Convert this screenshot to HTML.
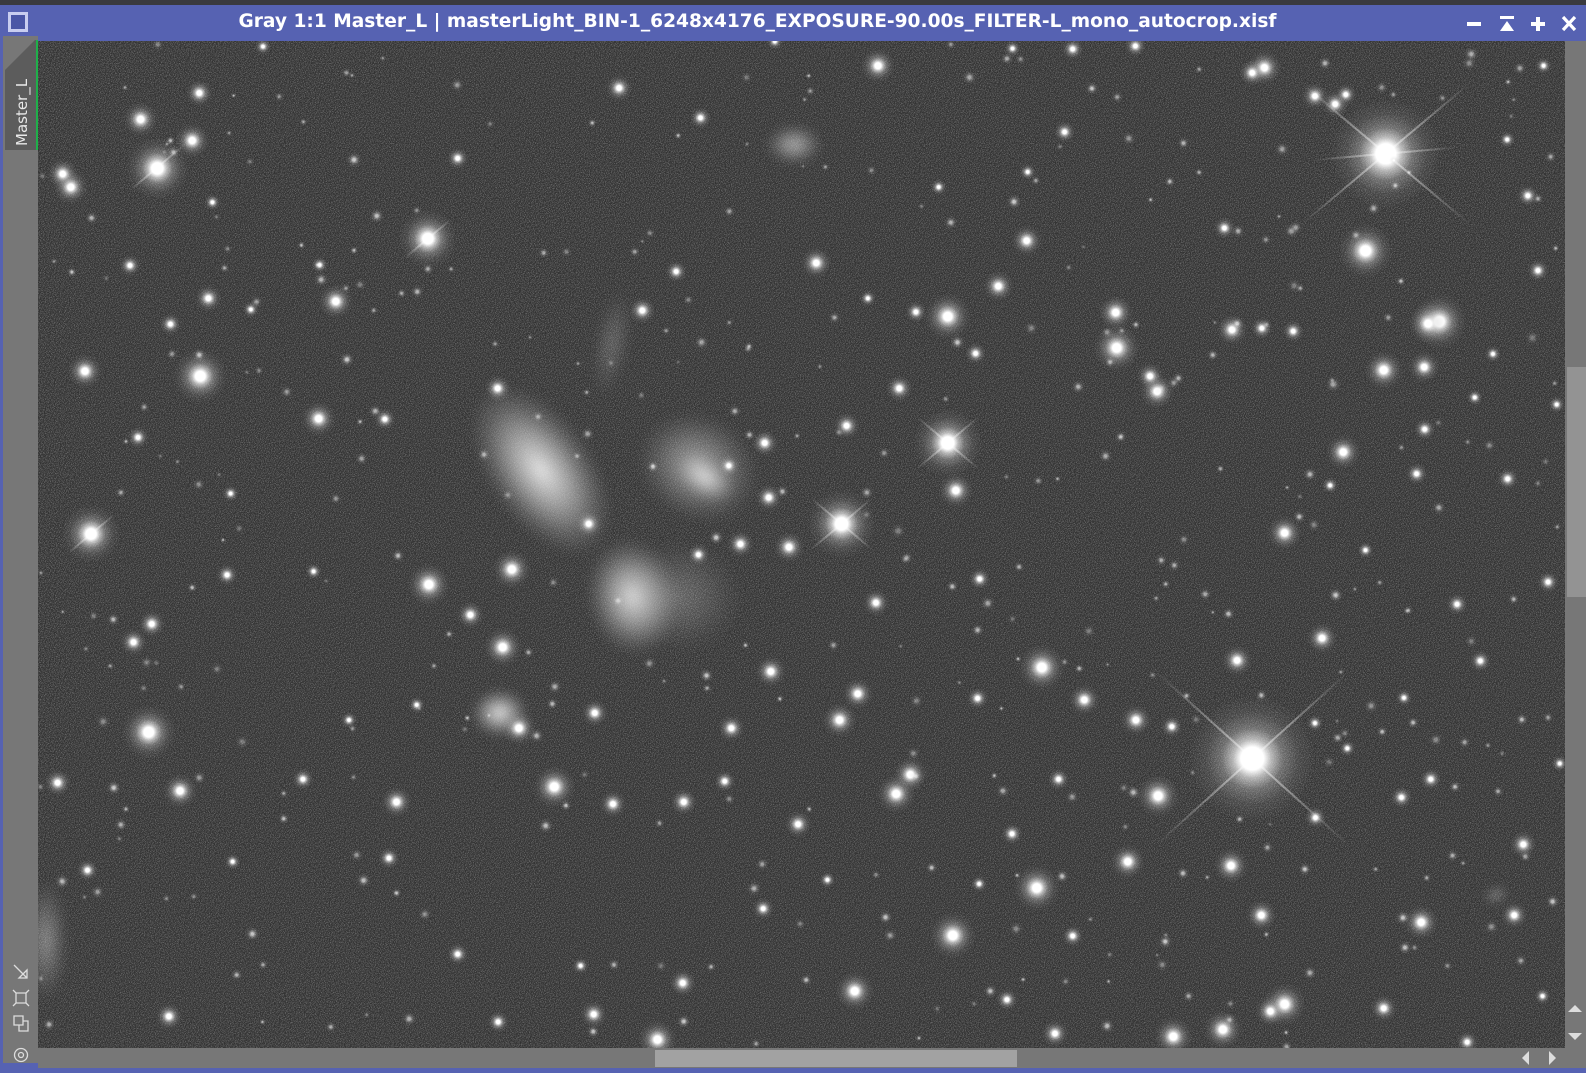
<!DOCTYPE html>
<html><head><meta charset="utf-8">
<style>
html,body{margin:0;padding:0;width:1586px;height:1073px;overflow:hidden;background:#3a3a3e;font-family:"DejaVu Sans","Liberation Sans",sans-serif}
#win{position:absolute;left:0;top:5px;width:1586px;height:1068px;background:#5662b2}
#title{position:absolute;left:0;top:0;width:1515px;height:36px;color:#fff;font-weight:bold;font-size:18.6px;line-height:33px;text-align:center}
#ico{position:absolute;left:8px;top:7px;width:20px;height:20px;border:3px solid #c8cdf0;box-sizing:border-box;background:#4a56a6}
#left{position:absolute;left:3px;top:36px;width:35px;height:1027px;background:#777}
#tab{position:absolute;left:2px;top:4px;width:31px;height:110px;background:#5c5c5c;border-right:2px solid #1fb04a;clip-path:polygon(0 30px,30px 0,100% 0,100% 100%,0 100%)}
#tab span{position:absolute;left:8px;color:#e8e8e8;font-size:15px;transform:rotate(-90deg);transform-origin:0 0;white-space:nowrap;top:106px}
#img{position:absolute;left:38px;top:41px;width:1527px;height:1007px;overflow:hidden;background:#363636}
#noise{position:absolute;left:0;top:0;width:100%;height:100%}
#vs{position:absolute;left:1565px;top:41px;width:21px;height:1007px;background:#777}
#vthumb{position:absolute;left:1567px;top:367px;width:19px;height:230px;background:#939393}
#hs{position:absolute;left:38px;top:1048px;width:1548px;height:20px;background:#777}
#hthumb{position:absolute;left:655px;top:1050px;width:362px;height:17px;background:#a2a2a2}
.tri{position:absolute;width:0;height:0}
#stars{position:absolute;left:-38px;top:-41px;width:1568px;height:1061px;transform-origin:0 0;transform:scale(1.0115,1.0113)}
.s{position:absolute;border-radius:50%}
.g{position:absolute;border-radius:50%;filter:blur(5px)}
.sp{position:absolute;height:2px;background:linear-gradient(90deg,rgba(255,255,255,0),rgba(255,255,255,.6) 50%,rgba(255,255,255,0))}
</style></head><body>
<div id="win">
 <div id="title">Gray 1:1 Master_L | masterLight_BIN-1_6248x4176_EXPOSURE-90.00s_FILTER-L_mono_autocrop.xisf</div>
 <div id="ico"></div>
 <svg style="position:absolute;left:1467px;top:8px" width="119" height="22" viewBox="0 0 119 22">
  <rect x="0" y="9" width="14" height="4" fill="#fff"/>
  <rect x="33" y="3" width="14" height="3" fill="#fff"/><polygon points="33,18 47,18 40,8" fill="#fff"/>
  <rect x="64" y="9" width="14" height="4" fill="#fff"/><rect x="69" y="4" width="4" height="14" fill="#fff"/>
  <path d="M96 4 L108 17 M108 4 L96 17" stroke="#fff" stroke-width="3.2"/>
 </svg>
</div>
<div id="left"><div id="tab"><span>Master_L</span></div>
 <svg style="position:absolute;left:6px;top:925px" width="24" height="110" viewBox="0 0 24 110" fill="none" stroke="#ddd" stroke-width="1.3">
  <path d="M5 4 L18 17 M18 9 L18 17 L10 17 Z"/>
  <path d="M7 32 H17 V42 H7 Z M4 29 L7 32 M20 29 L17 32 M4 45 L7 42 M20 45 L17 42"/>
  <path d="M5 55 H14 V64 H5 Z M10 64 V70 H19 V60 H14"/>
  <circle cx="12" cy="94" r="6.5"/><circle cx="12" cy="94" r="2.5"/>
 </svg>
</div>
<div id="img">
 <svg id="noise" width="1527" height="1007"><filter id="n"><feTurbulence type="fractalNoise" baseFrequency="1.2" numOctaves="1" seed="3"/><feColorMatrix type="matrix" values="0 0 0 0 0.5  0 0 0 0 0.5  0 0 0 0 0.5  2.2 0 0 0 -0.95"/></filter>
 <rect width="100%" height="100%" fill="#323232"/><rect width="100%" height="100%" filter="url(#n)" opacity="0.7"/></svg>
 <div id="stars"></div>
</div>
<div id="vs"></div><div id="vthumb"></div>
<div class="tri" style="left:1568px;top:1005px;border-left:7px solid transparent;border-right:7px solid transparent;border-bottom:7px solid #ddd"></div>
<div class="tri" style="left:1568px;top:1033px;border-left:7px solid transparent;border-right:7px solid transparent;border-top:7px solid #ddd"></div>
<div id="hs"></div><div id="hthumb"></div>
<div class="tri" style="left:1522px;top:1051px;border-top:7px solid transparent;border-bottom:7px solid transparent;border-right:7px solid #ddd"></div>
<div class="tri" style="left:1549px;top:1051px;border-top:7px solid transparent;border-bottom:7px solid transparent;border-left:7px solid #ddd"></div>
<script>
var c=document.getElementById('stars');
function star(x,y,r,a){a=a||1;var d=document.createElement('div');d.className='s';var R=r*2.1;
d.style.cssText='left:'+(x-R)+'px;top:'+(y-R)+'px;width:'+(2*R)+'px;height:'+(2*R)+'px;background:radial-gradient(circle closest-side,rgba(255,255,255,'+a+') 0%,rgba(255,255,255,'+a+') 18%,rgba(235,235,235,'+(a*0.7)+') 30%,rgba(210,210,210,'+(a*0.35)+') 48%,rgba(190,190,190,'+(a*0.12)+') 72%,rgba(180,180,180,0) 100%)';c.appendChild(d);}
function gal(x,y,rx,ry,rot,a){var d=document.createElement('div');d.className='g';
d.style.cssText='left:'+(x-rx)+'px;top:'+(y-ry)+'px;width:'+(2*rx)+'px;height:'+(2*ry)+'px;transform:rotate('+rot+'deg);background:radial-gradient(ellipse closest-side,rgba(245,245,245,'+a+') 0%,rgba(215,215,215,'+(a*0.7)+') 40%,rgba(180,180,180,'+(a*0.3)+') 75%,rgba(150,150,150,0) 100%)';c.appendChild(d);}
function spike(x,y,len,rot){var d=document.createElement('div');d.className='sp';
d.style.cssText='left:'+(x-len)+'px;top:'+(y-1)+'px;width:'+(2*len)+'px;transform:rotate('+rot+'deg)';c.appendChild(d);}
gal(535,465,95,52,55,0.9);gal(690,462,62,52,30,0.55);gal(697,472,32,20,35,0.75);
gal(625,590,45,58,-10,0.85);gal(670,590,65,55,0,0.25);gal(494,705,28,24,0,0.9);gal(785,143,28,20,0,0.6);
gal(605,340,18,55,10,0.22);gal(1479,885,12,6,-20,0.6);gal(45,930,22,60,0,0.4);
spike(1370,152,110,-40);spike(1370,152,110,40);spike(1370,152,70,-5);
spike(1238,750,130,-42);spike(1238,750,130,42);
spike(937,438,40,-40);spike(937,438,40,40);spike(832,518,40,-40);spike(832,518,40,40);
spike(155,166,35,-40);spike(423,236,30,-40);spike(90,528,30,-40);
var S=[[1370,152,26],[1238,750,30],[937,438,16],[832,518,16],[155,166,15],[423,236,14],[90,528,14],[147,724,13],[198,372,13],[1350,248,13],[937,313,11],[1104,344,11],[1423,318,13],[1412,320,9],[1030,660,11],[1025,878,11],[942,925,11],[548,778,10],[1145,787,10],[1270,993,10],[1209,1018,9],[845,980,9],[1405,912,8],[1217,856,8],[1115,852,8],[886,785,9],[900,766,8],[424,578,10],[506,563,9],[497,640,9],[332,298,8],[315,414,8],[84,367,8],[139,118,8],[190,139,8],[70,185,8],[62,172,7],[1368,366,9],[1328,447,8],[1270,527,8],[1307,631,7],[1144,387,8],[1103,309,8],[1218,326,7],[1408,363,7],[1250,67,8],[1238,72,6],[868,65,8],[612,87,6],[807,260,7],[1015,238,7],[987,283,7],[945,485,8],[762,664,7],[830,712,8],[848,686,7],[1072,692,7],[1123,712,7],[1223,653,7],[1506,835,6],[1497,905,6],[1247,905,7],[1160,1025,9],[650,1028,9],[178,782,8],[392,793,7],[167,1005,6],[57,774,6],[132,635,6],[150,617,6],[676,793,6],[606,795,6],[588,705,6],[723,720,6],[866,596,6],[780,541,7],[756,438,6],[837,421,6],[635,307,6],[492,384,6],[587,1003,6],[675,972,6],[1052,130,5],[452,156,5],[1520,267,5],[1510,193,5],[1300,95,6],[1320,103,6],[1490,473,5],[1530,575,5],[513,720,8],[720,460,5],[760,492,6],[732,538,6],[690,548,5],[582,518,6],[465,608,6],[197,92,6],[128,262,5],[206,295,6],[168,320,5],[136,432,5],[228,488,4],[380,414,5],[316,262,4],[248,306,4],[964,349,5],[889,384,6],[905,308,5],[1137,372,6],[1158,718,5],[1046,770,5],[966,690,5],[968,572,5],[1000,824,5],[1060,925,5],[1300,808,5],[1368,997,6],[1256,1000,7],[1043,1022,6],[995,988,5],[1385,788,5],[1414,770,5],[1463,653,5],[1440,597,5],[1400,468,5],[1278,327,5],[1247,324,5],[1330,93,5],[1210,225,5],[1490,138,4],[1526,65,4],[1060,48,5],[1122,45,5],[1001,48,4],[1016,170,4],[928,185,4],[858,295,4],[668,268,5],[692,116,5],[766,41,4],[260,46,4],[210,200,4],[224,568,5],[310,565,4],[86,860,5],[230,852,4],[299,770,5],[345,712,4],[412,697,4],[384,848,5],[452,943,5],[492,1010,5],[574,955,4],[754,898,5],[789,815,6],[716,772,5],[818,870,4],[968,874,4],[1300,715,4],[1332,740,4],[1388,690,4],[1350,544,4],[1315,480,4],[1408,424,5],[1458,393,4],[1476,350,4],[1539,400,4],[1542,755,4],[1525,985,4],[1450,1030,5]];
S.forEach(function(s){star(s[0],s[1],s[2]);});
var seed=7;function rnd(){seed=(seed*16807)%2147483647;return seed/2147483647;}
for(var i=0;i<380;i++){star(40+rnd()*1525,42+rnd()*1005,1.5+rnd()*2.2,0.3+rnd()*0.4);}
</script>
</body></html>
